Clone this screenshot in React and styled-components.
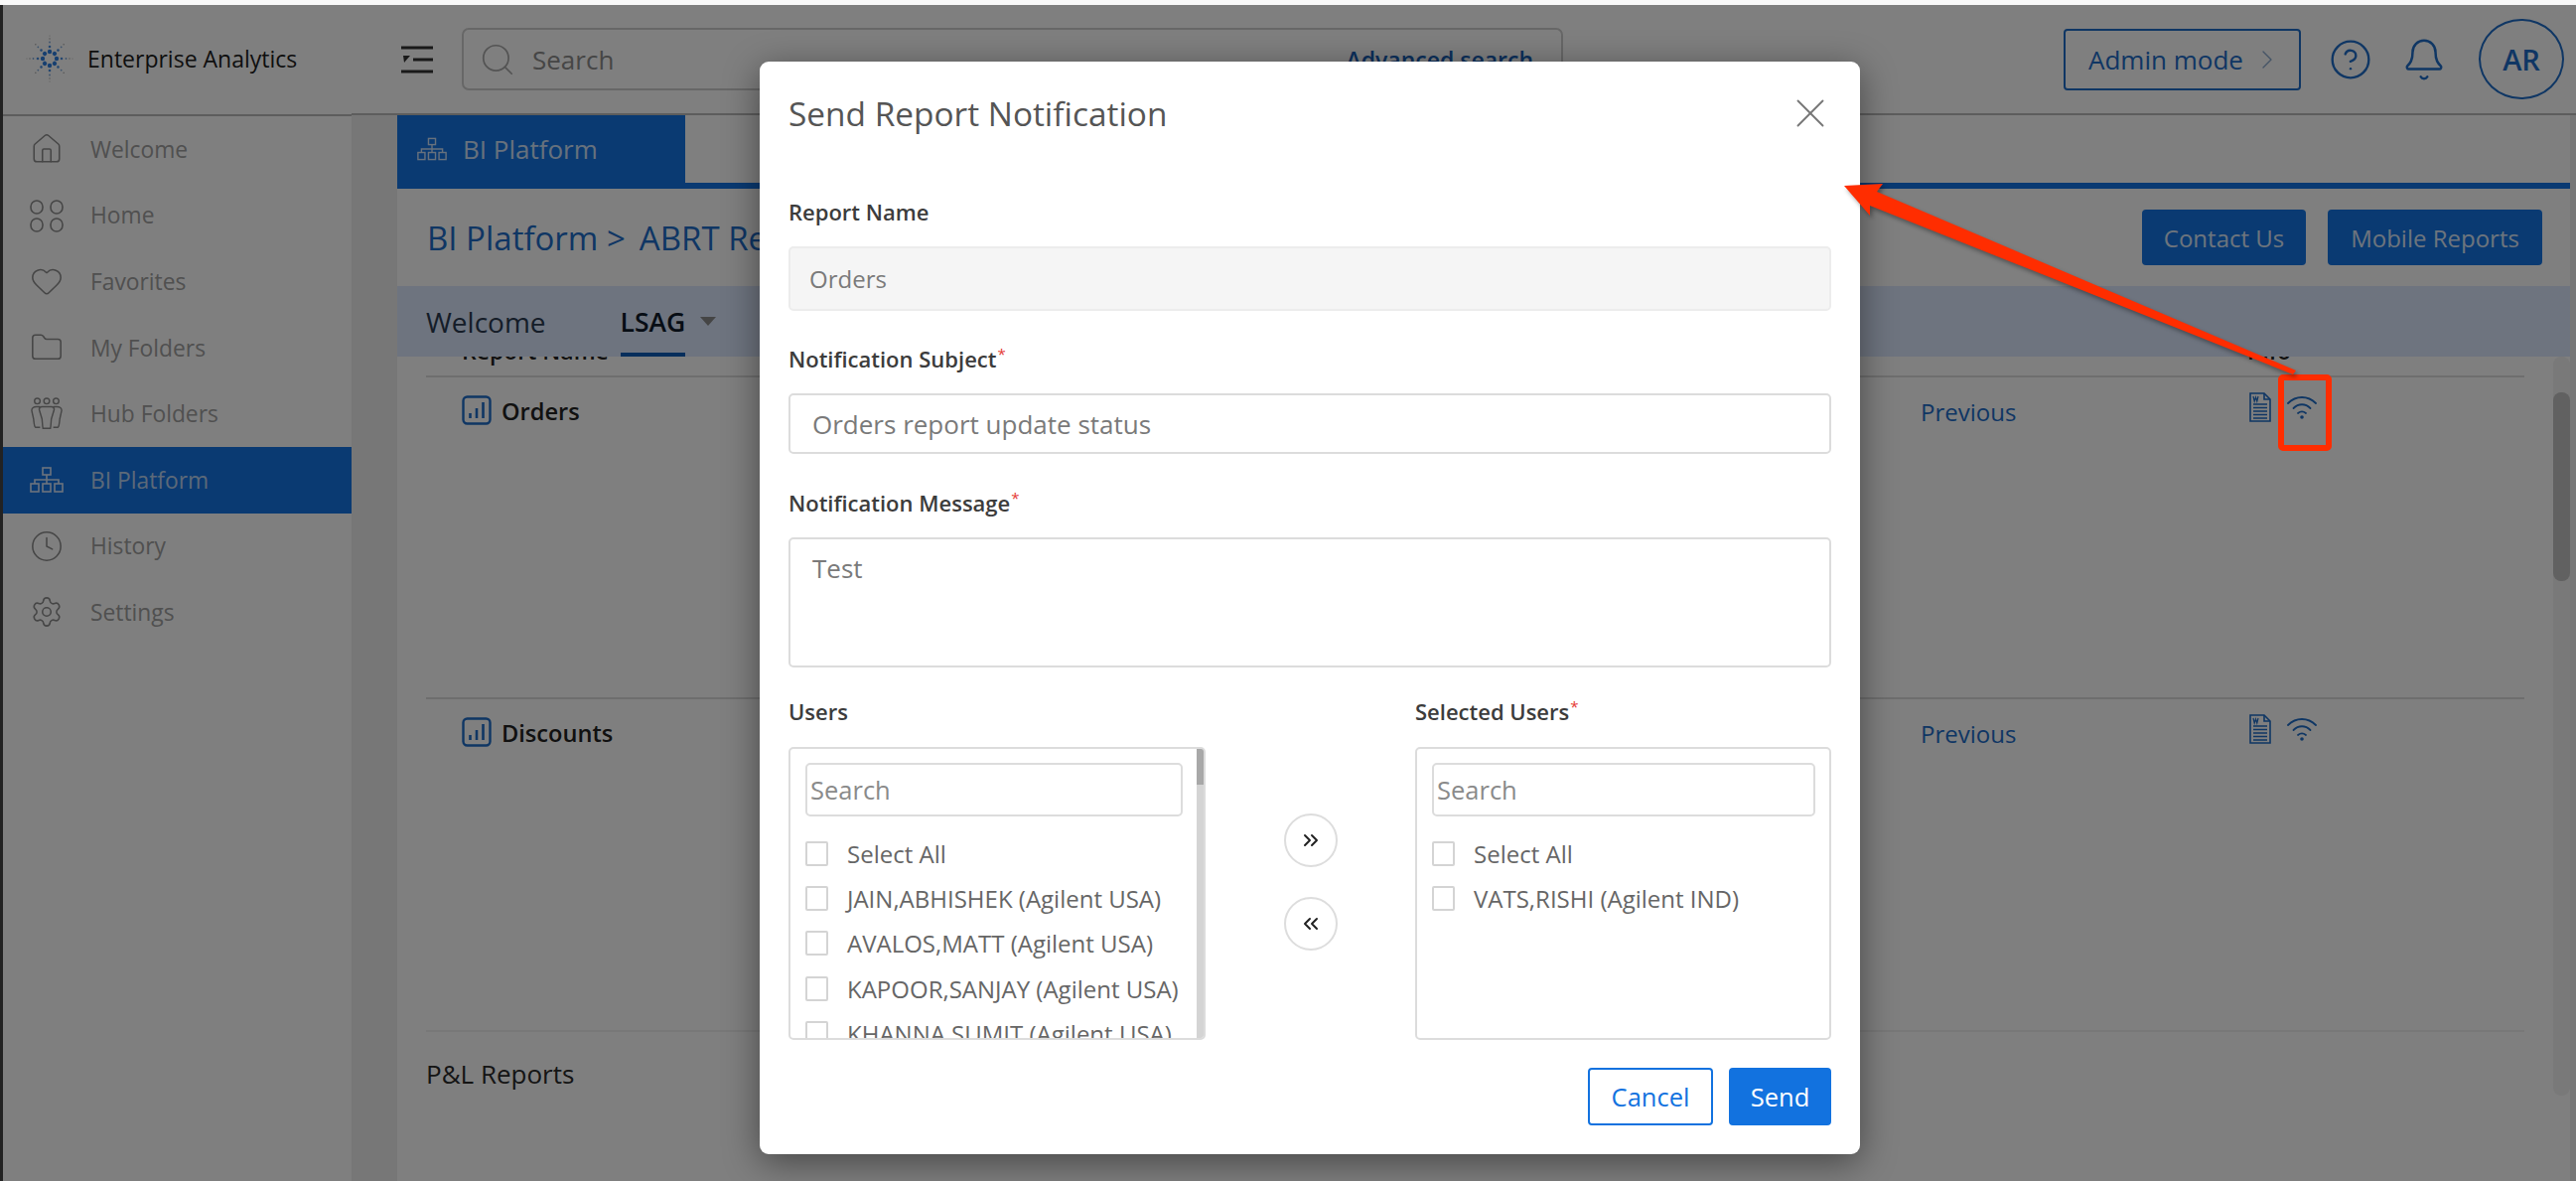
import styled, { createGlobalStyle } from "styled-components";
import {
  Bell,
  ChevronRight,
  ChevronsLeft,
  ChevronsRight,
  CircleHelp,
  Clock,
  Folder,
  Heart,
  House,
  Search,
  Settings,
  X,
} from "lucide-react";

const GlobalStyle = createGlobalStyle`
  html, body {
    margin: 0;
    padding: 0;
    overflow: hidden;
    background: #f8f8f8;
  }
  * {
    box-sizing: border-box;
  }
  body {
    font-family: "Open Sans", "Noto Sans", sans-serif;
  }
`;

const Screen = styled.div`
  position: relative;
  width: 2594px;
  height: 1189px;
  padding-top: 5px;
  background: #f8f8f8;
`;
const Frame = styled.div`
  position: relative;
  display: grid;
  grid-template-columns: 351px 1fr;
  height: 1184px;
  border-left: 3px solid #222;
  background: #fff;
  overflow: hidden;
`;

const Sidebar = styled.aside`
  display: flex;
  flex-direction: column;
  background: #fff;
`;
const Brand = styled.div`
  display: flex;
  align-items: center;
  gap: 13px;
  height: 112px;
  padding: 0 0 2px 22px;
  border-bottom: 2px solid #bbb;
  font-size: 23px;
  font-weight: 500;
  color: #1c1c1c;
`;
const NavItem = styled.div`
  display: flex;
  align-items: center;
  gap: 27px;
  height: 66.6px;
  padding-left: 27px;
  font-size: 22.8px;
  color: ${(props) => (props.$active ? "#b9d3f2" : "#a0a0a0")};
  background: ${(props) => (props.$active ? "#1474e4" : "transparent")};
  svg {
    flex: none;
    width: 34px;
    height: 34px;
    color: ${(props) => (props.$active ? "#d7e6fa" : "#8c8c8c")};
  }
`;

const Main = styled.main`
  display: flex;
  flex-direction: column;
  min-width: 0;
`;
const TopBar = styled.header`
  flex: none;
  display: flex;
  align-items: center;
  height: 111px;
  padding: 0 12px 0 50px;
  border-bottom: 2px solid #bbb;
`;
const MenuButton = styled.div`
  flex: none;
  width: 32px;
  height: 28px;
  margin-right: 29px;
  color: #333;
`;
const SearchBar = styled.div`
  display: flex;
  align-items: center;
  width: 1109px;
  height: 63px;
  padding: 0 28px 0 15px;
  border: 2px solid #cfcfcf;
  border-radius: 7px;
  font-size: 26px;
  color: #8c8c8c;
  svg {
    width: 38px;
    height: 38px;
    margin-right: 16px;
    color: #a8a8a8;
  }
`;
const AdvancedLink = styled.span`
  margin-left: auto;
  font-size: 23px;
  font-weight: 600;
  color: #1660b8;
`;
const AdminButton = styled.div`
  display: flex;
  align-items: center;
  justify-content: space-between;
  width: 239px;
  height: 62px;
  margin-left: auto;
  padding: 0 16px 0 23px;
  border: 2px solid #1e6dc8;
  border-radius: 4px;
  font-size: 26px;
  color: #1e6dc8;
  svg {
    width: 32px;
    height: 32px;
    color: #8aa8cc;
  }
`;
const TopIcon = styled.div`
  display: flex;
  margin-left: ${(props) => props.$gap}px;
  color: #1e6dc8;
  svg {
    width: ${(props) => props.$size}px;
    height: ${(props) => props.$size}px;
  }
`;
const Avatar = styled.div`
  display: flex;
  align-items: center;
  justify-content: center;
  width: 86px;
  height: 81px;
  margin-left: 32px;
  border: 2px solid #1e6dc8;
  border-radius: 50%;
  font-size: 29px;
  font-weight: 600;
  color: #1e6dc8;
`;

const Workspace = styled.div`
  flex: 1;
  display: flex;
  flex-direction: column;
  min-height: 0;
  padding: 0 6px 0 46px;
  background: #eee;
`;
const TabStrip = styled.div`
  flex: none;
  height: 74px;
  border-bottom: 6px solid #1474e4;
  background: #fff;
`;
const PlatformTab = styled.div`
  display: flex;
  align-items: center;
  gap: 16px;
  width: 290px;
  height: 68px;
  padding-left: 20px;
  background: #1474e4;
  font-size: 26px;
  color: #cfe2fa;
  svg {
    flex: none;
    width: 30px;
    height: 30px;
  }
`;
const TitleRow = styled.div`
  flex: none;
  display: flex;
  align-items: center;
  height: 98px;
  padding: 0 28px 0 30px;
  background: #fff;
`;
const Crumbs = styled.div`
  display: flex;
  align-items: center;
  gap: 14px;
  font-size: 33px;
  color: #1e6dc8;
`;
const PrimaryButton = styled.div`
  display: flex;
  align-items: center;
  justify-content: center;
  width: ${(props) => props.$width}px;
  height: 56px;
  margin-left: ${(props) => (props.$push ? "auto" : "22px")};
  border-radius: 4px;
  background: #1474e4;
  font-size: 24px;
  color: #dbe9fb;
`;
const SubTabs = styled.div`
  flex: none;
  display: flex;
  align-items: center;
  height: 71px;
  padding-left: 29px;
  background: #dde9ff;
`;
const SubTab = styled.div`
  position: relative;
  display: flex;
  align-items: center;
  height: 100%;
  margin-right: ${(props) => props.$gap}px;
  font-size: ${(props) => (props.$active ? 26.5 : 28)}px;
  font-weight: ${(props) => (props.$active ? 600 : 500)};
  color: ${(props) => (props.$active ? "#0f1a2a" : "#2a3a50")};
  &::after {
    content: "";
    display: ${(props) => (props.$active ? "block" : "none")};
    position: absolute;
    left: 0;
    right: 0;
    bottom: 0;
    height: 4px;
    background: #0f5cb8;
  }
`;
const Caret = styled.span`
  width: 0;
  height: 0;
  border-left: 8px solid transparent;
  border-right: 8px solid transparent;
  border-top: 9px solid #8a8a8a;
`;

const ScrollArea = styled.div`
  flex: 1;
  display: flex;
  min-height: 0;
  overflow: hidden;
  background: #fff;
`;
const TableWrap = styled.div`
  flex: 1;
  min-width: 0;
  padding: 0 29px;
`;
const ScrollTrack = styled.div`
  flex: none;
  width: 17px;
  height: 744px;
  padding-top: 36px;
  border-radius: 8px;
  background: #f2f2f2;
`;
const ScrollThumb = styled.div`
  height: 190px;
  border-radius: 8px;
  background: #c2c2c2;
`;
const TableRow = styled.div`
  display: grid;
  grid-template-columns: 1505px 329px 1fr;
  border-bottom: 2px solid ${(props) => (props.$faint ? "#f0f0f0" : "#dcdcdc")};
  height: ${(props) => props.$height}px;
  margin-top: ${(props) => props.$top || 0}px;
`;
const HeadCell = styled.div`
  padding: 17px 0 0 ${(props) => props.$indent || 0}px;
  font-size: 23px;
  font-weight: 600;
  color: #222;
`;
const NameCell = styled.div`
  display: flex;
  align-items: flex-start;
  gap: 10px;
  padding: 18px 0 0 36px;
  font-size: 23.6px;
  font-weight: 600;
  color: #222;
`;
const LinkCell = styled.div`
  padding-top: 18px;
  font-size: 24px;
  color: #1e6dc8;
`;
const InfoCell = styled.div`
  display: flex;
  align-items: flex-start;
  gap: 16px;
  padding: 15px 0 0 2px;
  svg + svg {
    margin-top: 3px;
  }
`;
const SectionTitle = styled.h3`
  margin: 24px 0 0;
  font-size: 26px;
  font-weight: 500;
  color: #2a2a2a;
`;

const Backdrop = styled.div`
  position: absolute;
  inset: 0;
  background: rgba(0, 0, 0, 0.5);
`;
const Modal = styled.section`
  position: absolute;
  left: 762px;
  top: 57px;
  display: flex;
  flex-direction: column;
  width: 1108px;
  height: 1100px;
  padding: 0 29px;
  border-radius: 9px;
  background: #fff;
  box-shadow: 0 8px 36px rgba(0, 0, 0, 0.45);
`;
const ModalHead = styled.div`
  flex: none;
  display: flex;
  align-items: center;
  justify-content: space-between;
  height: 104px;
  margin-bottom: 32px;
`;
const ModalTitle = styled.h2`
  margin: 0;
  font-size: 33.4px;
  font-weight: 400;
  color: #555;
`;
const CloseButton = styled.div`
  display: flex;
  margin-right: -4px;
  color: #777;
  svg {
    width: 50px;
    height: 50px;
  }
`;
const FieldLabel = styled.label`
  display: block;
  flex: none;
  height: 30px;
  margin-top: ${(props) => props.$top || 0}px;
  line-height: 30px;
  font-size: 22px;
  font-weight: 600;
  color: #3c3c3c;
`;
const Star = styled.sup`
  margin-left: 1px;
  font-size: 15px;
  line-height: 0;
  font-weight: 400;
  color: #e53935;
`;
const TextBox = styled.div`
  flex: none;
  height: ${(props) => props.$height}px;
  margin-top: 20px;
  padding: ${(props) => (props.$multi ? "11px 22px" : props.$disabled ? "0 19px" : "0 22px")};
  display: flex;
  align-items: ${(props) => (props.$multi ? "flex-start" : "center")};
  border: 2px solid ${(props) => (props.$disabled ? "#ececec" : "#dcdcdc")};
  border-radius: 5px;
  background: ${(props) => (props.$disabled ? "#f5f5f5" : "#fff")};
  font-size: ${(props) => (props.$disabled ? 24 : 26)}px;
  color: #7a7a7a;
`;
const PickerGrid = styled.div`
  flex: none;
  display: grid;
  grid-template-columns: 420px 1fr 419px;
  margin-top: 29px;
`;
const PickerColumn = styled.div`
  display: flex;
  flex-direction: column;
`;
const PickerBox = styled.div`
  display: flex;
  height: 295px;
  margin-top: 21px;
  border: 2px solid #dcdcdc;
  border-radius: 5px;
  overflow: hidden;
`;
const PickerList = styled.div`
  flex: 1;
  min-width: 0;
  padding: 14px 14px 0 15px;
`;
const PickerSearch = styled.div`
  display: flex;
  align-items: center;
  height: 54px;
  padding-left: 3px;
  border: 2px solid #dcdcdc;
  border-radius: 5px;
  font-size: 25.5px;
  color: #8a8a8a;
`;
const PickerRows = styled.div`
  margin-top: 15px;
`;
const PickerRow = styled.div`
  display: flex;
  align-items: center;
  gap: 19px;
  height: 45.2px;
  font-size: 24px;
  white-space: nowrap;
  color: #666;
`;
const CheckBox = styled.span`
  flex: none;
  width: 23px;
  height: 25px;
  border: 2px solid #d4d4d4;
  border-radius: 2px;
`;
const PickerScroll = styled.div`
  flex: none;
  width: 7px;
  background: #d4d4d4;
  &::before {
    content: "";
    display: block;
    height: 36px;
    background: #a8a8a8;
  }
`;
const TransferColumn = styled.div`
  display: flex;
  flex-direction: column;
  align-items: center;
  gap: 30px;
  padding-top: 118px;
`;
const RoundButton = styled.div`
  display: flex;
  align-items: center;
  justify-content: center;
  width: 54px;
  height: 54px;
  border: 2px solid #ddd;
  border-radius: 50%;
  color: #222;
  svg {
    width: 24px;
    height: 24px;
  }
`;
const ModalFooter = styled.div`
  flex: none;
  display: flex;
  justify-content: flex-end;
  gap: 16px;
  margin-top: 28px;
`;
const FooterButton = styled.div`
  display: flex;
  align-items: center;
  justify-content: center;
  width: ${(props) => props.$width}px;
  height: 58px;
  border: 2px solid #1272df;
  border-radius: 4px;
  background: ${(props) => (props.$filled ? "#1272df" : "#fff")};
  font-size: 25.5px;
  color: ${(props) => (props.$filled ? "#fff" : "#1272df")};
`;
const Annotation = styled.svg`
  position: absolute;
  left: 0;
  top: 0;
  width: 2594px;
  height: 1189px;
  pointer-events: none;
`;

// spark logo: rings of dots along eight rays
const Logo = () => {
  const rays = [0, 45, 90, 135, 180, 225, 270, 315];
  return (
    <svg width="50" height="50" viewBox="-25 -25 50 50" style={{ flex: "none" }}>
      {rays.map((a) => {
        const long = a % 90 === 0;
        return (
          <g key={a} transform={`rotate(${a})`}>
            <circle cx="7" cy="0" r="2.2" fill="#2f7fe0" />
            <circle cx="12" cy="0" r="1.3" fill="#4a8fe0" />
            <circle cx="16.500" cy="0" r="0.9" fill="#7ba6d8" />
            <circle cx="20" cy="0" r="0.7" fill="#a0a0a0" />
            {long && <circle cx="23" cy="0" r="0.6" fill="#b0b0b0" />}
          </g>
        );
      })}
    </svg>
  );
};

const MenuIcon = () => (
  <svg viewBox="0 0 32 28" width="32" height="28" fill="none" stroke="currentColor" strokeWidth="3">
    <path d="M0 2h32M12 14h20M0 26h32" />
    <path d="M2 10h7l-6 7z" fill="currentColor" stroke="none" />
  </svg>
);
const GridIcon = () => (
  <svg viewBox="0 0 34 34" fill="none" stroke="currentColor" strokeWidth="1.6">
    <rect x="1" y="2" width="12" height="13" rx="6" />
    <rect x="21" y="2" width="12" height="13" rx="6" />
    <rect x="1" y="20" width="12" height="13" rx="6" />
    <rect x="21" y="20" width="12" height="13" rx="6" />
  </svg>
);
const PeopleIcon = () => (
  <svg viewBox="0 0 34 36" fill="none" stroke="currentColor" strokeWidth="1.5">
    <circle cx="7" cy="4" r="3" />
    <circle cx="17" cy="4" r="3" />
    <circle cx="27" cy="4" r="3" />
    <path d="M10 10H6c-3 0-5 2-5 4l2 9c.3 2 .5 8 2 9h5" />
    <path d="M24 10h4c3 0 5 2 5 4l-2 9c-.3 2-.5 8-2 9h-5" />
    <path d="M12 10h10c2 0 3 1 3 3l-3 10c-.3 2-.5 8-1 10h-8c-.5-2-.7-8-1-10L9 13c0-2 1-3 3-3z" />
  </svg>
);
const SitemapIcon = () => (
  <svg viewBox="0 0 34 34" fill="none" stroke="currentColor" strokeWidth="1.6">
    <rect x="13" y="5" width="8" height="7" />
    <path d="M17 12v9M5 21v-4h24v4" />
    <rect x="1" y="21" width="8" height="8" />
    <rect x="13" y="21" width="8" height="8" />
    <rect x="25" y="21" width="8" height="8" />
  </svg>
);
const ChartIcon = () => (
  <svg width="30" height="30" viewBox="0 0 30 30" fill="none" stroke="#1e6dc8" strokeWidth="2.4" style={{ flex: "none" }}>
    <rect x="1.5" y="1.5" width="27" height="27" rx="4" />
    <path d="M8.5 18v5M15 13v10M21.5 7v16" strokeWidth="2.6" />
  </svg>
);
const DocIcon = () => (
  <svg width="22" height="30" viewBox="0 0 22 30" fill="none" stroke="#1e6dc8" strokeWidth="1.6">
    <path d="M1 1h14l6 6v22H1z" />
    <path d="M15 1v6h6" />
    <path d="M4 12h14M4 15.5h14M4 19h14M4 22.5h14M4 26h14" />
    <path d="M4 4l1.2 5 1.3-4 1.3 4L9 4" strokeWidth="1.2" />
  </svg>
);
const WifiIcon = () => (
  <svg width="30" height="24" viewBox="0 0 30 24" fill="none" stroke="#1e6dc8" strokeWidth="1.8" strokeLinecap="round">
    <path d="M1 8c8-8 20-8 28 0" />
    <path d="M6.5 13c5-5 12-5 17 0" />
    <path d="M11 18c2.500-2 5.500-2 8 0" />
    <circle cx="15" cy="22" r="1.800" fill="#1e6dc8" stroke="none" />
  </svg>
);

const navItems = [
  { label: "Welcome", icon: <House strokeWidth={1.1} /> },
  { label: "Home", icon: <GridIcon /> },
  { label: "Favorites", icon: <Heart strokeWidth={1.1} /> },
  { label: "My Folders", icon: <Folder strokeWidth={1.1} /> },
  { label: "Hub Folders", icon: <PeopleIcon /> },
  { label: "BI Platform", icon: <SitemapIcon />, active: true },
  { label: "History", icon: <Clock strokeWidth={1.1} /> },
  { label: "Settings", icon: <Settings strokeWidth={1.1} /> },
];
const reportRows = [
  { name: "Orders", height: 324 },
  { name: "Discounts", height: 335, faint: true },
];
const users = [
  "Select All",
  "JAIN,ABHISHEK (Agilent USA)",
  "AVALOS,MATT (Agilent USA)",
  "KAPOOR,SANJAY (Agilent USA)",
  "KHANNA,SUMIT (Agilent USA)",
];
const selectedUsers = ["Select All", "VATS,RISHI (Agilent IND)"];

const Picker = ({ label, required, rows, scroll }) => (
  <PickerColumn>
    <FieldLabel>
      {label}
      {required && <Star>*</Star>}
    </FieldLabel>
    <PickerBox>
      <PickerList>
        <PickerSearch>Search</PickerSearch>
        <PickerRows>
          {rows.map((row) => (
            <PickerRow key={row}>
              <CheckBox />
              {row}
            </PickerRow>
          ))}
        </PickerRows>
      </PickerList>
      {scroll && <PickerScroll />}
    </PickerBox>
  </PickerColumn>
);

export default function App() {
  return (
    <Screen>
      <GlobalStyle />
      <Frame>
        <Sidebar>
          <Brand>
            <Logo />
            Enterprise Analytics
          </Brand>
          {navItems.map((item) => (
            <NavItem key={item.label} $active={item.active}>
              {item.icon}
              {item.label}
            </NavItem>
          ))}
        </Sidebar>
        <Main>
          <TopBar>
            <MenuButton>
              <MenuIcon />
            </MenuButton>
            <SearchBar>
              <Search strokeWidth={1.1} />
              Search
              <AdvancedLink>Advanced search</AdvancedLink>
            </SearchBar>
            <AdminButton>
              Admin mode
              <ChevronRight strokeWidth={1} />
            </AdminButton>
            <TopIcon $gap={28} $size={44}>
              <CircleHelp strokeWidth={1.3} />
            </TopIcon>
            <TopIcon $gap={29} $size={46}>
              <Bell strokeWidth={1.3} />
            </TopIcon>
            <Avatar>AR</Avatar>
          </TopBar>
          <Workspace>
            <TabStrip>
              <PlatformTab>
                <SitemapIcon />
                BI Platform
              </PlatformTab>
            </TabStrip>
            <TitleRow>
              <Crumbs>
                <span>BI Platform &gt;</span>
                <span>ABRT Reports</span>
              </Crumbs>
              <PrimaryButton $width={165} $push>
                Contact Us
              </PrimaryButton>
              <PrimaryButton $width={216}>Mobile Reports</PrimaryButton>
            </TitleRow>
            <SubTabs>
              <SubTab $gap={75}>Welcome</SubTab>
              <SubTab $gap={15} $active>
                LSAG
              </SubTab>
              <Caret />
            </SubTabs>
            <ScrollArea>
              <TableWrap>
                <TableRow $height={60} $top={-39}>
                  <HeadCell $indent={36}>Report Name</HeadCell>
                  <HeadCell />
                  <HeadCell>Info</HeadCell>
                </TableRow>
                {reportRows.map((row) => (
                  <TableRow key={row.name} $height={row.height} $faint={row.faint}>
                    <NameCell>
                      <ChartIcon />
                      {row.name}
                    </NameCell>
                    <LinkCell>Previous</LinkCell>
                    <InfoCell>
                      <DocIcon />
                      <WifiIcon />
                    </InfoCell>
                  </TableRow>
                ))}
                <SectionTitle>P&amp;L Reports</SectionTitle>
              </TableWrap>
              <ScrollTrack>
                <ScrollThumb />
              </ScrollTrack>
            </ScrollArea>
          </Workspace>
        </Main>
        <Backdrop />
        <Modal>
          <ModalHead>
            <ModalTitle>Send Report Notification</ModalTitle>
            <CloseButton>
              <X strokeWidth={0.9} />
            </CloseButton>
          </ModalHead>
          <FieldLabel>Report Name</FieldLabel>
          <TextBox $height={65} $disabled>
            Orders
          </TextBox>
          <FieldLabel $top={33}>
            Notification Subject<Star>*</Star>
          </FieldLabel>
          <TextBox $height={61}>Orders report update status</TextBox>
          <FieldLabel $top={34}>
            Notification Message<Star>*</Star>
          </FieldLabel>
          <TextBox $height={131} $multi>
            Test
          </TextBox>
          <PickerGrid>
            <Picker label="Users" rows={users} scroll />
            <TransferColumn>
              <RoundButton>
                <ChevronsRight strokeWidth={2} />
              </RoundButton>
              <RoundButton>
                <ChevronsLeft strokeWidth={2} />
              </RoundButton>
            </TransferColumn>
            <Picker label="Selected Users" required rows={selectedUsers} />
          </PickerGrid>
          <ModalFooter>
            <FooterButton $width={126}>Cancel</FooterButton>
            <FooterButton $width={103} $filled>
              Send
            </FooterButton>
          </ModalFooter>
        </Modal>
      </Frame>
      <Annotation viewBox="0 0 2594 1189">
        <rect x="2297" y="380" width="48" height="71" rx="2" fill="none" stroke="#ff2d00" strokeWidth="6" />
        <polygon
          points="1857,187 1896,185 1890,193 2312,373 2309,377 1883,207 1883,217"
          fill="#ff2d00"
          style={{ filter: "drop-shadow(2px 3px 2px rgba(0,0,0,.35))" }}
        />
      </Annotation>
    </Screen>
  );
}
